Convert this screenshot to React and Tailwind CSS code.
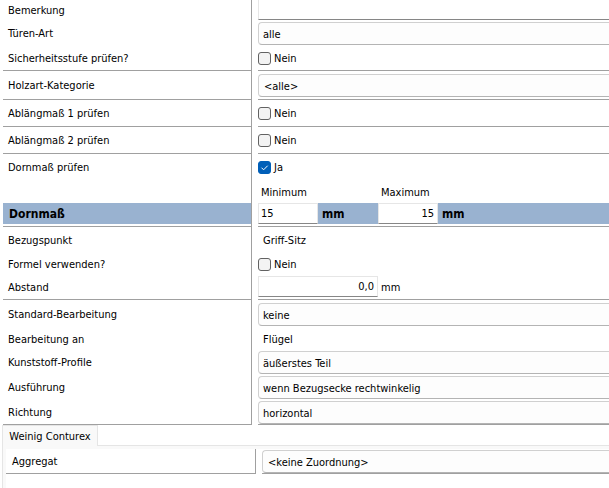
import React, { useId, useState } from "react";

function Row({ label, htmlFor, height = "h-[25px]", line = false, children }) {
  const border = line ? "border-b border-b-[#a0a0a0]" : "";
  return (
    <div className={`flex gap-1.5 pl-[3px] ${height}`}>
      <div className={`flex w-[249px] shrink-0 items-center border-r border-r-[#a0a0a0] pl-[5px] ${border}`}>
        {htmlFor ? <label htmlFor={htmlFor}>{label}</label> : <span>{label}</span>}
      </div>
      <div className={`flex min-w-0 flex-1 items-center ${border}`}>{children}</div>
    </div>
  );
}

function Select({ id, value, wide = false }) {
  return (
    <select
      id={id}
      defaultValue={value}
      className={`h-[23px] w-full appearance-none rounded-l border border-r-0 border-[#d0d0d0] border-b-[#b4b4b4] bg-[#fdfdfd] pt-0.5 outline-none ${wide ? "pl-[5px]" : "pl-1"}`}
    >
      <option>{value}</option>
    </select>
  );
}

function SelectRow({ label, value, height, line, wide }) {
  const id = useId();
  return (
    <Row label={label} htmlFor={id} height={height} line={line}>
      <Select id={id} value={value} wide={wide} />
    </Row>
  );
}

function CheckRow({ label, initial = false, height, line }) {
  const id = useId();
  const [checked, setChecked] = useState(initial);
  return (
    <Row label={label} htmlFor={id} height={height} line={line}>
      <label className="flex items-center gap-[3px]">
        <span className="grid">
          <input
            id={id}
            type="checkbox"
            checked={checked}
            onChange={(e) => setChecked(e.target.checked)}
            className="col-start-1 row-start-1 size-[13px] appearance-none rounded-[3px] border border-[#626262] bg-[#f3f3f3] checked:border-[#005fb8] checked:bg-[#005fb8]"
          />
          {checked && (
            <svg viewBox="0 0 13 13" className="pointer-events-none col-start-1 row-start-1 size-[13px]" fill="none" stroke="#fff" strokeWidth="1">
              <path d="M3.5 6.7 5.6 8.8 9.7 4.7" />
            </svg>
          )}
        </span>
        {checked ? "Ja" : "Nein"}
      </label>
    </Row>
  );
}

const field = "h-[21px] border border-[#e6e6e6] border-b-[#868686] bg-white outline-none";

export default function App() {
  return (
    <main className="min-h-screen overflow-hidden bg-white font-['DejaVu_Sans_Condensed','DejaVu_Sans',sans-serif] text-[11px] leading-[15px] text-black">
      <form>
        <Row label="Bemerkung" htmlFor="bemerkung" height="h-[21px]">
          <input id="bemerkung" className="h-5 w-full self-start border-b border-l border-b-[#868686] border-l-[#e6e6e6] px-1 outline-none" />
        </Row>
        <SelectRow label="Türen-Art" value="alle" />
        <CheckRow label="Sicherheitsstufe prüfen?" line />
        <SelectRow label="Holzart-Kategorie" value="<alle>" height="h-[29px]" line wide />
        <CheckRow label="Ablängmaß 1 prüfen" height="h-[27px]" line />
        <CheckRow label="Ablängmaß 2 prüfen" height="h-[27px]" line />
        <CheckRow label="Dornmaß prüfen" initial height="h-[27px]" />
        <Row label="" height="h-[22px]">
          <label htmlFor="minimum" className="w-[120px] pl-[3px]">Minimum</label>
          <label htmlFor="maximum" className="pl-[3px]">Maximum</label>
        </Row>

        <div className="flex gap-1.5 pl-[3px]">
          <div className="w-[249px] shrink-0 border-r border-b border-[#a0a0a0] pb-0.5">
            <div className="flex h-[21px] items-center bg-[#99b2d0] pl-1.5 text-xs font-bold">Dornmaß</div>
          </div>
          <div className="min-w-0 flex-1 border-b border-[#a0a0a0] pb-0.5">
            <div className="flex h-[21px] items-center bg-[#99b2d0] font-bold">
              <div className="flex w-[120px] items-center gap-1">
                <input id="minimum" defaultValue="15" className={`${field} w-[60px] pl-[2px] font-normal`} />
                <span className="text-xs">mm</span>
              </div>
              <div className="flex items-center gap-1">
                <input id="maximum" defaultValue="15" className={`${field} w-[60px] pr-[3px] text-right font-normal`} />
                <span className="text-xs">mm</span>
              </div>
            </div>
          </div>
        </div>

        <Row label="Bezugspunkt" height="h-[26px]">
          <span className="pl-[5px]">Griff-Sitz</span>
        </Row>
        <CheckRow label="Formel verwenden?" height="h-[22px]" />
        <Row label="Abstand" htmlFor="abstand" line>
          <input id="abstand" defaultValue="0,0" className={`${field} w-[120px] self-start mt-px pr-[3px] text-right`} />
          <span className="pl-[3px]">mm</span>
        </Row>
        <SelectRow label="Standard-Bearbeitung" value="keine" height="h-[28px]" />
        <Row label="Bearbeitung an" height="h-[22px]">
          <span className="pl-[5px]">Flügel</span>
        </Row>
        <SelectRow label="Kunststoff-Profile" value="äußerstes Teil" />
        <SelectRow label="Ausführung" value="wenn Bezugsecke rechtwinkelig" />
        <SelectRow label="Richtung" value="horizontal" line />

        <div role="tablist" className="flex pl-0.5">
          <button type="button" role="tab" aria-selected="true" className="h-[21px] w-24 border border-b-0 border-[#e5e5e5] bg-[#f9f9f9]">
            Weinig Conturex
          </button>
          <div className="flex-1 border-b border-[#e5e5e5]" />
        </div>
        <div role="tabpanel" className="pl-0.5">
          <div className="border-l border-[#e5e5e5] bg-[#f9f9f9] pt-[3px] pl-[3px]">
            <div className="h-[39px] bg-white">
              <div className="flex h-[25px] gap-1.5">
                <div className="flex w-[250px] shrink-0 items-center border-r border-b border-[#a0a0a0] pl-1.5">
                  <label htmlFor="aggregat">Aggregat</label>
                </div>
                <div className="flex min-w-0 flex-1 items-center border-b border-[#a0a0a0]">
                  <Select id="aggregat" value="<keine Zuordnung>" wide />
                </div>
              </div>
            </div>
          </div>
        </div>
      </form>
    </main>
  );
}
